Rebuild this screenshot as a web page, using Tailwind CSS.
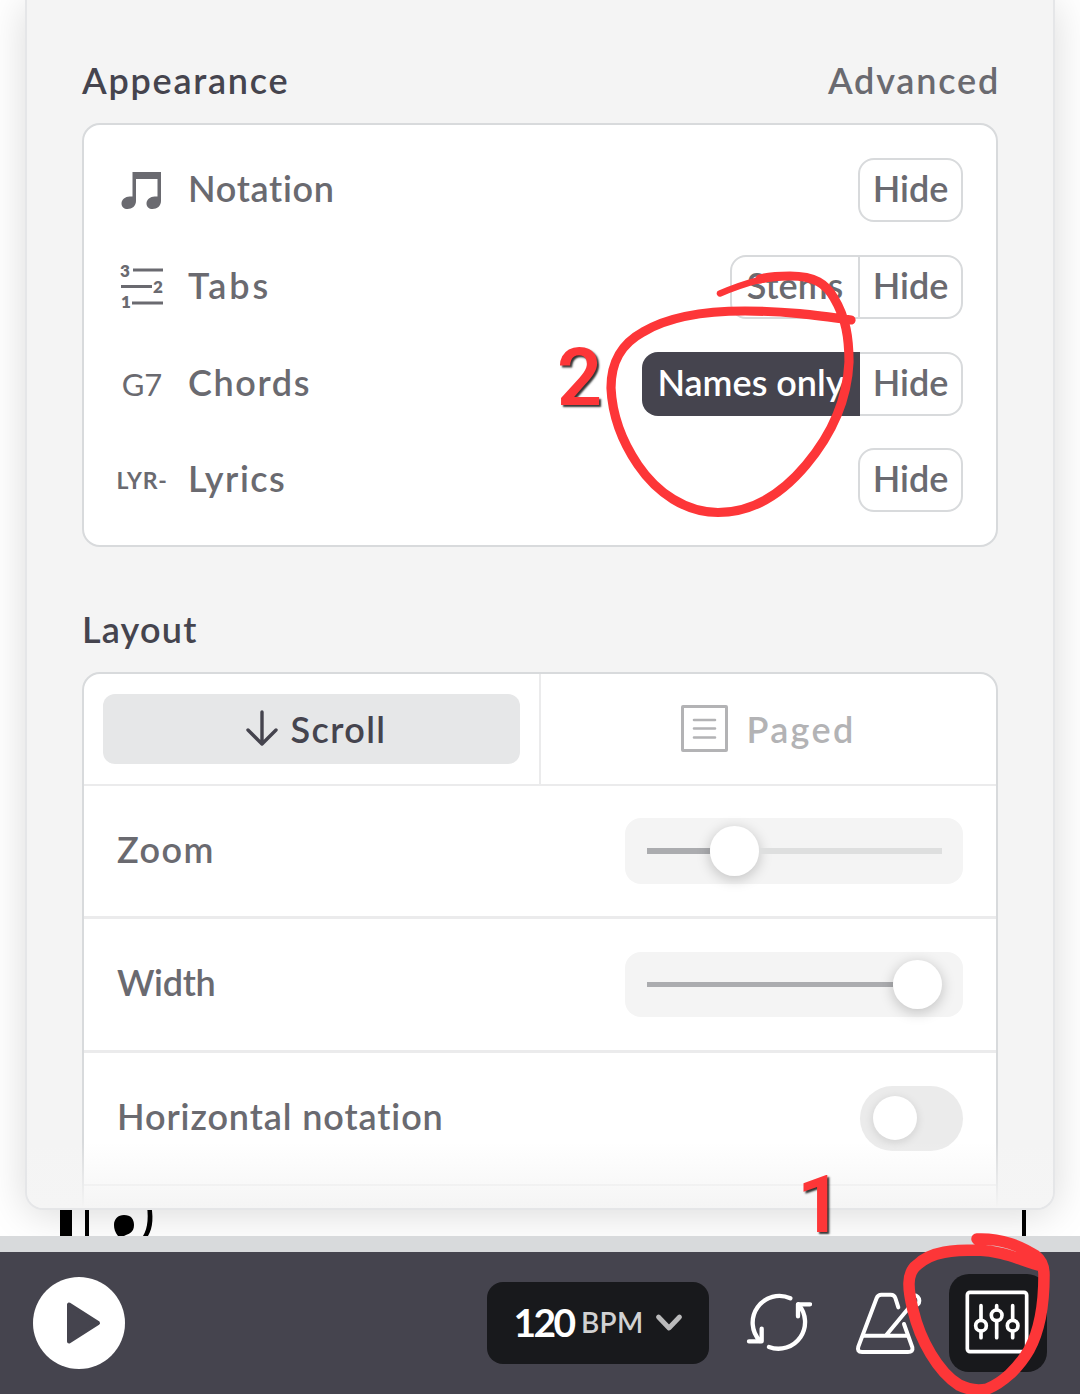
<!DOCTYPE html>
<html lang="en">
<head>
  <meta charset="UTF-8">
  <meta name="viewport" content="width=device-width, initial-scale=1.0">
  <title>Player settings</title>
  <script src="https://cdn.jsdelivr.net/npm/@tailwindcss/browser@4"></script>
</head>
<body class="relative w-[1080px] h-[1394px] overflow-hidden bg-white font-['Lato',sans-serif] font-semibold text-4xl leading-[44px] text-[#6a6a70]">
  <main class="relative h-[1236px] overflow-hidden">
    <!-- score behind the panel -->
    <svg class="absolute left-0 top-[1200px]" width="1080" height="36" viewBox="0 0 1080 36">
      <path d="M60 0h12v36H60zM85 0h4v36h-4zM1022 0h4v36h-4z"/>
      <path d="M124 15c7 0 10 4 10 10 0 7-5 9-8 10l-2 1h-6c-3-4-4-7-4-11 0-6 4-10 10-10zM146 0h4c4 16 3 28-2 36h-5c5-8 6-20 3-36z"/>
    </svg>

    <section class="relative mx-[25px] h-[1210px] px-[55px] border-2 border-t-0 border-[#e5e6e8] rounded-b-[18px] bg-[#f4f4f4] shadow-[0_4px_40px_rgba(0,0,0,0.15)] overflow-hidden">
      <div class="flex justify-between pt-[58px] h-[123px]">
        <h2 class="text-[#45444e] tracking-[1.75px]">Appearance</h2>
        <span class="-mr-0.5 tracking-[1.8px]">Advanced</span>
      </div>

      <div class="flex flex-col gap-[33px] h-[424px] py-[33px] pr-[33px] pl-8 border-2 border-[#d8dadc] rounded-[18px] bg-white">
        <div class="flex items-center h-16">
          <svg class="w-[52px] mr-5" width="52" height="48" viewBox="0 0 52 48">
            <path fill="#6a6a70" d="M16.500 6H45v29c0 5-4 8-8.500 8-3.500 0-6-2-6-5.500 0-4 4-7 8-7H41.500V13H20v22c0 5-4 8-8.500 8-3.500 0-6-2-6-5.500 0-4 4-7 8-7h3z"/>
          </svg>
          <span class="grow pb-1 tracking-[0.7px]">Notation</span>
          <button class="h-16 w-[105px] pb-1 border-2 border-[#d8dadc] rounded-2xl">Hide</button>
        </div>
        <div class="flex items-center h-16">
          <svg class="w-[52px] mr-5 overflow-visible" width="52" height="52" viewBox="0 -2 52 52">
            <path stroke="#6a6a70" stroke-width="3" d="M17 7h30M5 23.500h31M16 40h31"/>
            <g fill="#6a6a70" font-family="Lato" font-weight="800" font-size="17">
              <text x="4" y="14">3</text>
              <text x="37" y="30">2</text>
              <text x="5" y="45">1</text>
            </g>
          </svg>
          <span class="grow pb-1 tracking-[2.9px]">Tabs</span>
          <button class="h-16 w-[130px] -mr-0.5 pb-1 border-2 border-[#d8dadc] rounded-l-2xl">Stems</button>
          <button class="h-16 w-[105px] pb-1 border-2 border-[#d8dadc] rounded-r-2xl">Hide</button>
        </div>
        <div class="flex items-center h-16">
          <span class="w-[52px] mr-5 text-center font-normal text-[31px]">G7</span>
          <span class="grow pb-1 tracking-[1.6px]">Chords</span>
          <button class="relative h-16 w-[218px] -mr-0.5 pb-1 rounded-l-2xl bg-[#45444e] text-white">Names only</button>
          <button class="h-16 w-[105px] pb-1 border-2 border-[#d8dadc] rounded-r-2xl">Hide</button>
        </div>
        <div class="flex items-center h-16 -mt-px">
          <span class="w-[52px] mr-5 text-center font-bold text-[23px] tracking-[0.8px] whitespace-nowrap">LYR-</span>
          <span class="grow pb-1 tracking-[1.5px]">Lyrics</span>
          <button class="h-16 w-[105px] pb-1 border-2 border-[#d8dadc] rounded-2xl">Hide</button>
        </div>
      </div>

      <h2 class="pt-[60px] h-[125px] text-[#45444e] tracking-[1.2px]">Layout</h2>

      <div class="border-2 border-[#d8dadc] rounded-t-[18px] bg-white h-[560px]">
        <div class="flex h-28 border-b-2 border-[#ebebec]">
          <div class="w-[457px] px-[19px] py-5 border-r-2 border-[#ebebec]">
            <button class="flex items-center justify-center gap-3 w-full h-[70px] pl-2 rounded-xl bg-[#e6e7e8] text-[#45444e]">
              <svg class="-mt-0.5" width="34" height="38" viewBox="0 0 34 38" fill="none" stroke="#45444e" stroke-width="3.400" stroke-linecap="round" stroke-linejoin="round">
                <path d="M17 3v32M3 21l14 14 14-14"/>
              </svg>
              <span class="tracking-[1.4px]">Scroll</span>
            </button>
          </div>
          <button class="flex grow items-center justify-center gap-[18px] text-[#b3b3b5]">
            <svg class="-mt-0.5" width="47" height="47" viewBox="0 0 47 47" fill="none" stroke="#b3b3b5">
              <rect x="1.500" y="1.500" width="44" height="44" rx="0.500" stroke-width="3"/>
              <path d="M13 15h21M13 23.500h21M13 32.500h21" stroke-width="2.600" stroke-linecap="round"/>
            </svg>
            <span class="tracking-[2.3px]">Paged</span>
          </button>
        </div>
        <div class="flex items-center justify-between h-[133px] px-[33px] border-b-3 border-[#ebebec]">
          <span class="pb-[5px] tracking-[1.5px]">Zoom</span>
          <div class="flex items-center w-[338px] h-[66px] pl-[22px] pr-[21px] rounded-2xl bg-[#f4f4f4]">
            <div class="w-[63px] h-1.5 bg-[#abacaf]"></div>
            <div class="w-[49px] h-[50px] rounded-full bg-white shadow-[0_3px_14px_rgba(0,0,0,0.22)]"></div>
            <div class="grow h-1.5 bg-[#dedfdf]"></div>
          </div>
        </div>
        <div class="flex items-center justify-between h-[134px] px-[33px] border-b-3 border-[#ebebec]">
          <span class="pb-[5px] tracking-[-0.3px]">Width</span>
          <div class="flex items-center w-[338px] h-[65px] pl-[22px] pr-[21px] rounded-2xl bg-[#f4f4f4]">
            <div class="grow h-[5px] bg-[#abacaf]"></div>
            <div class="size-[49px] rounded-full bg-white shadow-[0_3px_14px_rgba(0,0,0,0.22)]"></div>
          </div>
        </div>
        <div class="flex items-center justify-between h-[133px] px-[33px] border-b-2 border-[#ebebec]">
          <span class="pb-[5px] tracking-[0.9px]">Horizontal notation</span>
          <div class="flex items-center w-[103px] h-[65px] pl-[13px] rounded-full bg-[#ebebeb]">
            <div class="size-11 -mt-0.5 rounded-full bg-white shadow-[0_2px_10px_rgba(0,0,0,0.12)]"></div>
          </div>
        </div>
      </div>
      <!-- bottom fade -->
      <div class="absolute inset-x-0 bottom-0 h-[66px] bg-linear-to-b from-[#f5f5f5]/0 to-[#f5f5f5]"></div>
    </section>
  </main>

  <footer class="flex items-center h-[158px] px-[33px] border-t-16 border-[#d8dadc] bg-[#45444e]">
    <button class="size-[92px] rounded-full bg-white">
      <svg width="92" height="92" viewBox="0 0 92 92">
        <path d="M36 27.500v37l29-18.500z" fill="#45444e" stroke="#45444e" stroke-width="4" stroke-linejoin="round"/>
      </svg>
    </button>
    <button class="flex items-center ml-auto w-[222px] h-[82px] pl-[26px] pb-[3px] rounded-2xl bg-[#18191c] text-white">
      <span class="w-[61px] font-bold text-[39px] tracking-[-2.6px]">120</span>
      <span class="ml-[7px] w-[62px] text-[28px] tracking-[0.3px] text-[#d1d1d2]">BPM</span>
      <svg class="ml-[12px] mt-0.5" width="28" height="20" viewBox="0 0 28 20" fill="none" stroke="#bababb" stroke-width="4.800" stroke-linecap="round" stroke-linejoin="round">
        <path d="M3.500 4L14 15 24.500 4"/>
      </svg>
    </button>
    <svg class="ml-9 -mt-0.5" width="67" height="60" viewBox="0 0 201 180" fill="none" stroke="white" stroke-width="13" stroke-linecap="round" stroke-linejoin="round">
      <path d="M136 19A80 80 0 0 0 45 147M72 165A80 80 0 0 0 160 37"/>
      <path d="M12 148H50V110M195 37H159V73"/>
    </svg>
    <svg class="ml-[42px]" width="68" height="66" viewBox="0 0 204 198" fill="none" stroke="white" stroke-width="12" stroke-linecap="round" stroke-linejoin="round">
      <path d="M133 52L124 24Q121 14 110 14H82Q72 14 68 24L13 170Q8 186 24 186H162Q178 186 175 172L150 102"/>
      <path d="M28 137H160M97 135L171 46"/>
      <circle cx="180" cy="32" r="16"/>
    </svg>
    <button class="flex items-center justify-center ml-[27px] size-[98px] rounded-[20px] bg-[#18191c]">
      <svg class="-mt-[2px] -ml-[2px]" width="64" height="64" viewBox="0 0 192 192" fill="none" stroke="white" stroke-width="11" stroke-linecap="round">
        <rect x="7" y="7" width="178" height="178" rx="8"/>
        <path d="M48 47V90M48 124V143M95 47V59M95 93V143M143 47V90M143 124V143"/>
        <circle cx="48" cy="107" r="16"/>
        <circle cx="95" cy="76" r="16"/>
        <circle cx="143" cy="107" r="16"/>
      </svg>
    </button>
  </footer>

  <!-- hand-drawn step marks -->
  <svg class="absolute inset-0 pointer-events-none" width="1080" height="1394" viewBox="0 0 1080 1394" fill="none" stroke="#fd3638" stroke-linecap="round" stroke-linejoin="round">
    <path stroke-width="6.500" d="M720 293.500C745 283 765 277 790 276"/>
    <path stroke-width="9.200" d="M760 279C772 276 780 276 790 276C815 276 826 284 834 298C846 318 849 338 849 362C847 405 827 440 806 465C780 496 750 512.500 718 512.500C686 512.500 657 493 638 465C619 437 612 410 611 388C611 362 621 344 643 332C668 317 705 311 745 311C785 311 815 315 851 320"/>
    <path stroke-width="11.500" d="M977 1239C1002 1238 1020 1246 1036 1256Q1044 1262 1044 1275C1044 1305 1040 1330 1029 1350C1018 1369 1002 1383 987 1389Q973 1392 959 1385C938 1372 920 1340 913 1310C908 1290 906 1273 917 1265C931 1251 955 1250 978 1250C1003 1251 1020 1260 1042 1266"/>
  </svg>
  <span class="absolute left-[557px] top-[338px] font-['Roboto',sans-serif] font-semibold text-[79px] leading-[80px] text-[#fd3638] [text-shadow:2px_2px_2px_rgba(0,0,0,0.8)]">2</span>
  <span class="absolute left-[797px] top-[1165px] font-['Roboto',sans-serif] font-semibold text-[79px] leading-[80px] text-[#fd3638] [text-shadow:2px_2px_2px_rgba(0,0,0,0.8)]">1</span>
</body>
</html>
